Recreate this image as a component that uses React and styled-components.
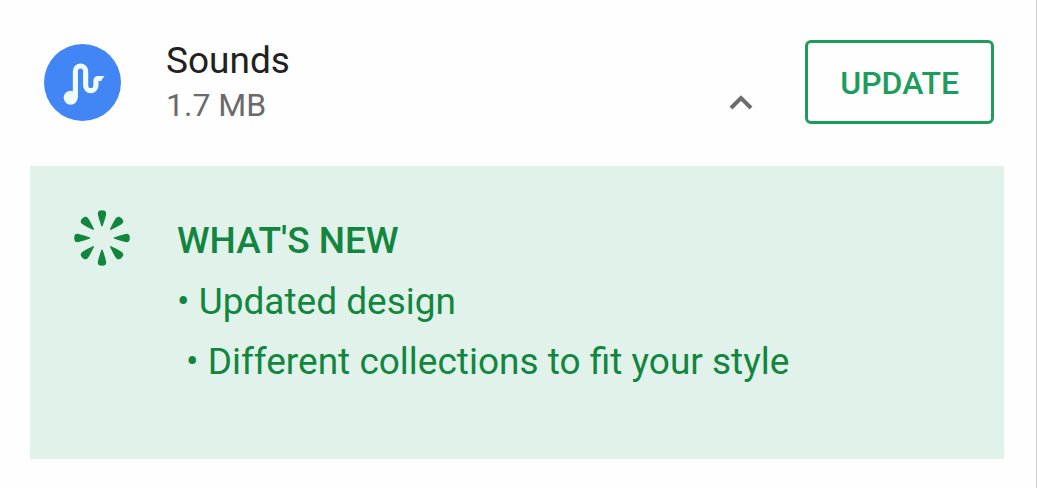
import React, { useState } from "react";
import styled, { createGlobalStyle } from "styled-components";

const GlobalStyle = createGlobalStyle`
  *, *::before, *::after { box-sizing: border-box; }
  body {
    margin: 0;
    background: #fefefe;
    font-family: Roboto, "Liberation Sans", sans-serif;
  }
`;

const Page = styled.main`
  min-height: 100vh;
  padding: 40px 32px 28px 30px;
  border-right: 1px solid #cfcfcf;
`;

const AppRow = styled.header`
  display: flex;
  align-items: center;
  height: 84px;
  padding: 0 10px 0 14px;
`;

const AppIcon = styled.svg`
  flex: none;
  width: 77px;
  height: 77px;
`;

const AppInfo = styled.div`
  flex: 1;
  margin-left: 45px;
  padding-top: 2px;
`;

const AppName = styled.h1`
  margin: 0;
  font-size: 37px;
  line-height: 44px;
  font-weight: 400;
  color: #212121;
`;

const AppSize = styled.p`
  margin: 0;
  font-size: 32px;
  line-height: 44px;
  color: #6a6a6a;
`;

const ToggleButton = styled.button`
  display: flex;
  align-self: flex-end;
  justify-content: center;
  width: 48px;
  padding: 12px;
  margin-right: 40px;
  border: 0;
  background: none;
  color: #6d6d6d;
  cursor: pointer;
`;

const UpdateButton = styled.button`
  height: 84px;
  padding: 2px 32px 0;
  border: 3px solid #1d9d5c;
  border-radius: 6px;
  background: none;
  color: #1d9d5c;
  font-family: inherit;
  font-size: 32px;
  line-height: 40px;
  font-weight: 500;
  cursor: pointer;
`;

const NewsPanel = styled.section`
  display: flex;
  align-items: flex-start;
  gap: 47px;
  margin-top: 42px;
  padding: 44px 44px 67px;
  background: #e0f2ea;
  color: #12853f;
`;

const BurstIcon = styled.svg`
  flex: none;
  width: 56px;
  height: 56px;
`;

const NewsTitle = styled.h2`
  margin: 0;
  font-size: 37px;
  line-height: 62px;
  font-weight: 500;
`;

const NewsList = styled.ul`
  margin: 0;
  padding: 0;
  list-style: none;
  font-size: 37px;
  line-height: 60px;
`;

const NewsItem = styled.li`
  padding-left: ${(p) => (p.$indent ? "9px" : "0")};

  &::before {
    content: "• ";
  }
`;

const SPOKES = [0, 45, 90, 135, 180, 225, 270, 315];

export default function App() {
  const [open, setOpen] = useState(true);

  return (
    <>
      <GlobalStyle />
      <Page>
        <AppRow>
          <AppIcon viewBox="0 0 78 78" aria-hidden="true">
            <circle cx="39" cy="39" r="39" fill="#4285f4" />
            <path
              d="M31.8 54V27.5a5.2 5.2 0 0 1 10.4 0v14.5a5.2 5.2 0 0 0 10.4 0V37.6q0-2.6 2.6-2.6H58"
              fill="none"
              stroke="#eefcff"
              strokeWidth="5.2"
            />
            <path d="M55 32.4h6.2l-3.6 5.2H55z" fill="#eefcff" />
            <circle cx="27" cy="54.4" r="7.1" fill="#eefcff" />
          </AppIcon>
          <AppInfo>
            <AppName>Sounds</AppName>
            <AppSize>1.7 MB</AppSize>
          </AppInfo>
          <ToggleButton
            type="button"
            aria-label="Toggle release notes"
            aria-expanded={open}
            onClick={() => setOpen(!open)}
          >
            <svg width="24" height="18" viewBox="0 0 24 18" aria-hidden="true">
              <path
                d={open ? "M2 14 12 4l10 10" : "M2 4l10 10L22 4"}
                fill="none"
                stroke="currentColor"
                strokeWidth="4"
              />
            </svg>
          </ToggleButton>
          <UpdateButton type="button">UPDATE</UpdateButton>
        </AppRow>
        {open && (
          <NewsPanel>
            <BurstIcon viewBox="-28 -28 56 56" aria-hidden="true">
              {SPOKES.map((angle) => (
                <path
                  key={angle}
                  d="M-.6-11.8C-2-16-3.4-19.6-4.1-23.4-4.6-26.4-3.2-27.8 0-27.8S4.6-26.4 4.1-23.4C3.4-19.6 2-16 .6-11.8Z"
                  fill="currentColor"
                  transform={`rotate(${angle})`}
                />
              ))}
            </BurstIcon>
            <div>
              <NewsTitle>WHAT'S NEW</NewsTitle>
              <NewsList>
                <NewsItem>Updated design</NewsItem>
                <NewsItem $indent>Different collections to fit your style</NewsItem>
              </NewsList>
            </div>
          </NewsPanel>
        )}
      </Page>
    </>
  );
}
